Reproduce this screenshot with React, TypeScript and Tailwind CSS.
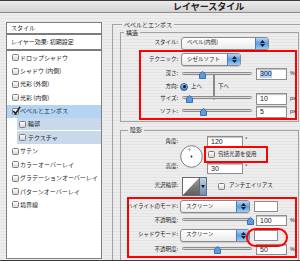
import clsx from "clsx";

type Effect = { name: string; checked?: boolean; active?: boolean; sub?: boolean };

const effects: Effect[] = [
	{ name: "ドロップシャドウ" },
	{ name: "シャドウ (内側)" },
	{ name: "光彩 (外側)" },
	{ name: "光彩 (内側)" },
	{ name: "ベベルとエンボス", checked: true, active: true },
	{ name: "輪郭", sub: true },
	{ name: "テクスチャ", sub: true },
	{ name: "サテン" },
	{ name: "カラーオーバーレイ" },
	{ name: "グラデーションオーバーレイ" },
	{ name: "パターンオーバーレイ" },
	{ name: "境界線" },
];

const num = "font-['Liberation_Sans',sans-serif]";

function CheckBox({ checked }: { checked?: boolean }) {
	return (
		<span className="relative flex h-[7px] w-[7px] shrink-0 rounded-[1.5px] border border-[#7d7d7d] bg-gradient-to-b from-white to-[#d6d6d6]">
			{checked && (
				<svg className="absolute -left-[1px] -top-[3px]" width="9" height="9" viewBox="0 0 10 10">
					<path d="M1.5 5.5 L4 8.5 L9 1" fill="none" stroke="#1a1a1a" strokeWidth="1.8" />
				</svg>
			)}
		</span>
	);
}

function Stepper() {
	return (
		<span className="flex h-full w-[13px] shrink-0 flex-col items-center justify-center gap-[1px] border-l border-[#4c7bb8] bg-gradient-to-b from-[#b3d6f7] via-[#5a9ce6] to-[#9ccbf6]">
			<svg width="5" height="3" viewBox="0 0 5 3">
				<path d="M0 3 L2.5 0 L5 3Z" fill="#1b1b1b" />
			</svg>
			<svg width="5" height="3" viewBox="0 0 5 3">
				<path d="M0 0 L2.5 3 L5 0Z" fill="#1b1b1b" />
			</svg>
		</span>
	);
}

function PopUp({ value, className }: { value: string; className: string }) {
	return (
		<div
			className={clsx(
				"flex h-[13px] shrink-0 items-stretch overflow-hidden rounded-[3px] border border-[#8a8a8a] bg-gradient-to-b from-white to-[#ebebeb] shadow-[0_1px_0_rgba(0,0,0,0.12)]",
				className,
			)}
		>
			<span className="flex flex-1 items-center whitespace-nowrap pl-[5px] text-[5.5px] leading-none">{value}</span>
			<Stepper />
		</div>
	);
}

function Slider({ at }: { at: number }) {
	return (
		<div className="relative ml-[4px] h-[11px] w-[70px] shrink-0">
			<div className="absolute inset-x-0 top-[3px] h-[3px] rounded-full border border-[#8c8c8c] bg-[#d9d9d9]" />
			<svg className="absolute top-[2px]" style={{ left: at - 3.5 }} width="7" height="8" viewBox="0 0 7 8">
				<path d="M3.5 0.5 L6.5 3 V7.5 H0.5 V3 Z" fill="#5b9be2" stroke="#2a5a98" strokeWidth="0.8" />
			</svg>
		</div>
	);
}

function NumBox({ value, unit, selected, className }: { value: string; unit?: string; selected?: boolean; className: string }) {
	return (
		<div className="flex shrink-0 items-center">
			<div
				className={clsx(
					"flex items-center border border-[#8e8e8e] bg-white pl-[3px] shadow-[inset_0_1px_1px_rgba(0,0,0,0.25)]",
					className,
				)}
			>
				<span className={clsx("text-[7px] leading-[8px]", num, selected && "bg-[#b5d3f7]")}>{value}</span>
			</div>
			{unit && <span className={clsx("ml-[3px] text-[5.5px] leading-none", num)}>{unit}</span>}
		</div>
	);
}

function Radio({ on }: { on?: boolean }) {
	return on ? (
		<span className="flex h-[8px] w-[8px] shrink-0 items-center justify-center rounded-full border border-[#2a5a98] bg-gradient-to-b from-[#a4cdf6] to-[#3b82d8]">
			<span className="h-[3px] w-[3px] rounded-full bg-[#111]" />
		</span>
	) : (
		<span className="h-[8px] w-[8px] shrink-0 rounded-full border border-[#8a8a8a] bg-gradient-to-b from-white to-[#dcdcdc]" />
	);
}

function Label({ text, className }: { text: string; className: string }) {
	return (
		<span className={clsx("flex shrink-0 justify-end whitespace-nowrap text-[5.5px] leading-none", className)}>{text}</span>
	);
}

function Dial() {
	return (
		<svg className="ml-[2px] mt-[11px] shrink-0" width="23" height="23" viewBox="0 0 23 23">
			<circle cx="11.5" cy="11.5" r="10.8" fill="#fff" stroke="#6f6f6f" strokeWidth="0.9" />
			<circle cx="11.5" cy="11.5" r="0.9" fill="#222" />
			<path d="M9.5 2.8 V6.2 M7.8 4.5 H11.2" stroke="#9a9a9a" strokeWidth="0.7" />
		</svg>
	);
}

function Contour() {
	return (
		<div className="ml-[4px] flex h-[19px] shrink-0">
			<svg width="18" height="19" viewBox="0 0 18 19">
				<defs>
					<linearGradient id="cg" x1="0" y1="0" x2="0" y2="1">
						<stop offset="0" stopColor="#9c9c9c" />
						<stop offset="1" stopColor="#5e5e5e" />
					</linearGradient>
				</defs>
				<rect x="0.5" y="0.5" width="17" height="18" fill="#fff" stroke="#6a6a6a" />
				<path d="M1 18 L17 1 V18 Z" fill="url(#cg)" />
			</svg>
			<span className="flex w-[7px] items-center justify-center border border-l-0 border-[#5a6f8c] bg-gradient-to-b from-[#c3d3e6] to-[#6f8db2]">
				<svg width="4" height="3" viewBox="0 0 4 3">
					<path d="M0 0 L2 3 L4 0Z" fill="#111" />
				</svg>
			</span>
		</div>
	);
}

export default function App() {
	return (
		<div className="relative h-[261px] w-[300px] overflow-hidden border-b border-t border-[#3a3a3a] bg-[repeating-linear-gradient(180deg,#ededed_0px,#ededed_2px,#e4e4e4_2px,#e4e4e4_3px)] font-['Noto_Sans_CJK_JP',sans-serif] text-[#1a1a1a]">
			<div className="h-[12px] border-b border-[#8c8c8c] bg-gradient-to-b from-[#ececec] to-[#d2d2d2] pl-[173px] text-[9px] font-bold leading-[11px] text-[#222]">
				レイヤースタイル
			</div>

			<div className="flex">
				<div className="ml-[6px] mt-[9px] h-[237px] w-[96px] shrink-0 border border-[#7f7f7f] bg-white">
					<div className="flex h-[12px] items-center border-b-2 border-[#7c7c7c] pl-[4px] text-[6px] leading-none">スタイル</div>
					<div className="flex h-[16px] items-center border-b-2 border-[#7c7c7c] pl-[4px] text-[6px] leading-none">
						レイヤー効果: 初期設定
					</div>
					{effects.map((e) => (
						<div
							key={e.name}
							className={clsx(
								"flex h-[13.4px] items-center",
								e.active && "bg-[#b4d4f4]",
								e.sub ? "ml-[10px] border-b border-white bg-[#c9d8ea] pl-[2px]" : "pl-[5px]",
							)}
						>
							<CheckBox checked={e.checked} />
							<span className={clsx("whitespace-nowrap text-[6px] leading-none", e.sub ? "ml-[2px]" : "ml-[1px]")}>
								{e.name}
							</span>
						</div>
					))}
				</div>

				<fieldset className="ml-[10px] mt-[8px] h-[260px] w-[200px] shrink-0 border border-[#a2a2a2]">
					<legend className="ml-[9px] px-[2px] text-[6px] leading-[7px]">ベベルとエンボス</legend>

					<fieldset className="ml-[7px] mt-[1px] w-[179px] border border-[#a2a2a2] pb-[1px]">
						<legend className="ml-[3px] px-[2px] text-[6px] leading-[7px]">構造</legend>

						<div className="flex h-[14px] items-center">
							<Label text="スタイル:" className="w-[57px]" />
							<PopUp value="ベベル(内側)" className="ml-[3px] w-[88px]" />
						</div>

						<div className="ml-[18px] w-[158px] border-2 border-[#ff0000]">
							<div className="flex h-[15px] items-center">
								<Label text="テクニック:" className="w-[37px]" />
								<PopUp value="シゼルソフト" className="ml-[3px] w-[60px]" />
							</div>
							<div className="flex h-[14px] items-center">
								<Label text="深さ:" className="w-[37px]" />
								<Slider at={20} />
								<div className="ml-[4px]">
									<NumBox value="300" unit="%" selected className="h-[12px] w-[31px]" />
								</div>
							</div>
							<div className="flex h-[11px] items-center">
								<Label text="方向:" className="w-[37px]" />
								<span className="ml-[2px]">
									<Radio on />
								</span>
								<span className="ml-[3px] text-[5.5px] leading-none">上へ</span>
								<span className="ml-[11px]">
									<Radio />
								</span>
								<span className="ml-[3px] text-[5.5px] leading-none">下へ</span>
							</div>
							<div className="flex h-[13px] items-center">
								<Label text="サイズ:" className="w-[37px]" />
								<Slider at={7} />
								<div className="ml-[4px]">
									<NumBox value="10" unit="px" className="h-[12px] w-[31px]" />
								</div>
							</div>
							<div className="flex h-[13px] items-center">
								<Label text="ソフト:" className="w-[37px]" />
								<Slider at={21} />
								<div className="ml-[4px]">
									<NumBox value="5" unit="px" className="h-[12px] w-[31px]" />
								</div>
							</div>
						</div>
					</fieldset>

					<fieldset className="ml-[7px] mt-[4px] h-[200px] w-[179px] border border-[#a2a2a2]">
						<legend className="ml-[7px] px-[2px] text-[6px] leading-[8px]">陰影</legend>

						<div className="flex h-[41px]">
							<div className="flex w-[57px] shrink-0 flex-col items-end justify-between pb-[5px] pt-[3px] text-[5.5px] leading-[8px]">
								<span>角度:</span>
								<span>高度:</span>
							</div>
							<Dial />
							<div className="ml-[1px] flex flex-col">
								<div className="ml-[3px] mt-[2px] flex items-start">
									<NumBox value="120" className="h-[11px] w-[36px]" />
									<span className={clsx("ml-[2px] text-[6px] leading-none", num)}>°</span>
								</div>
								<div className="-mt-[1px] flex h-[17px] w-[64px] items-center border-2 border-[#ff0000] pl-[2px]">
									<CheckBox />
									<span className="ml-[3px] whitespace-nowrap text-[5.5px] leading-none">包括光源を使用</span>
								</div>
								<div className="ml-[3px] flex items-start">
									<NumBox value="30" className="h-[11px] w-[36px]" />
									<span className={clsx("ml-[2px] text-[6px] leading-none", num)}>°</span>
								</div>
							</div>
						</div>

						<div className="flex h-[22px] items-center">
							<Label text="光沢輪郭:" className="w-[57px]" />
							<Contour />
							<span className="ml-[11px]">
								<CheckBox />
							</span>
							<span className="ml-[4px] whitespace-nowrap text-[5.5px] leading-none">アンチエイリアス</span>
						</div>

						<div className="ml-[6px] w-[170px] border-2 border-[#ff0000]">
							<div className="flex h-[15px] items-center">
								<Label text="ハイライトのモード:" className="w-[49px]" />
								<PopUp value="スクリーン" className="ml-[2px] w-[70px]" />
								<span className="ml-[4px] h-[11px] w-[24px] border border-[#8e8e8e] bg-white" />
							</div>
							<div className="flex h-[13px] items-center">
								<Label text="不透明度:" className="w-[49px]" />
								<Slider at={68} />
								<div className="ml-[4px]">
									<NumBox value="100" unit="%" className="h-[11px] w-[31px]" />
								</div>
							</div>
							<div className="flex h-[16px] items-center">
								<Label text="シャドウモード:" className="w-[49px]" />
								<PopUp value="スクリーン" className="ml-[2px] w-[70px]" />
								<span className="ml-[4px] h-[11px] w-[24px] border border-[#8e8e8e] bg-white" />
							</div>
							<div className="flex h-[13px] items-center">
								<Label text="不透明度:" className="w-[49px]" />
								<Slider at={35} />
								<div className="ml-[4px]">
									<NumBox value="50" unit="%" className="h-[11px] w-[31px]" />
								</div>
							</div>
						</div>
					</fieldset>
				</fieldset>
			</div>

			<span className="absolute left-[246px] top-[227px] h-[19px] w-[42px] rounded-full border-2 border-[#ff0000]" />
		</div>
	);
}
